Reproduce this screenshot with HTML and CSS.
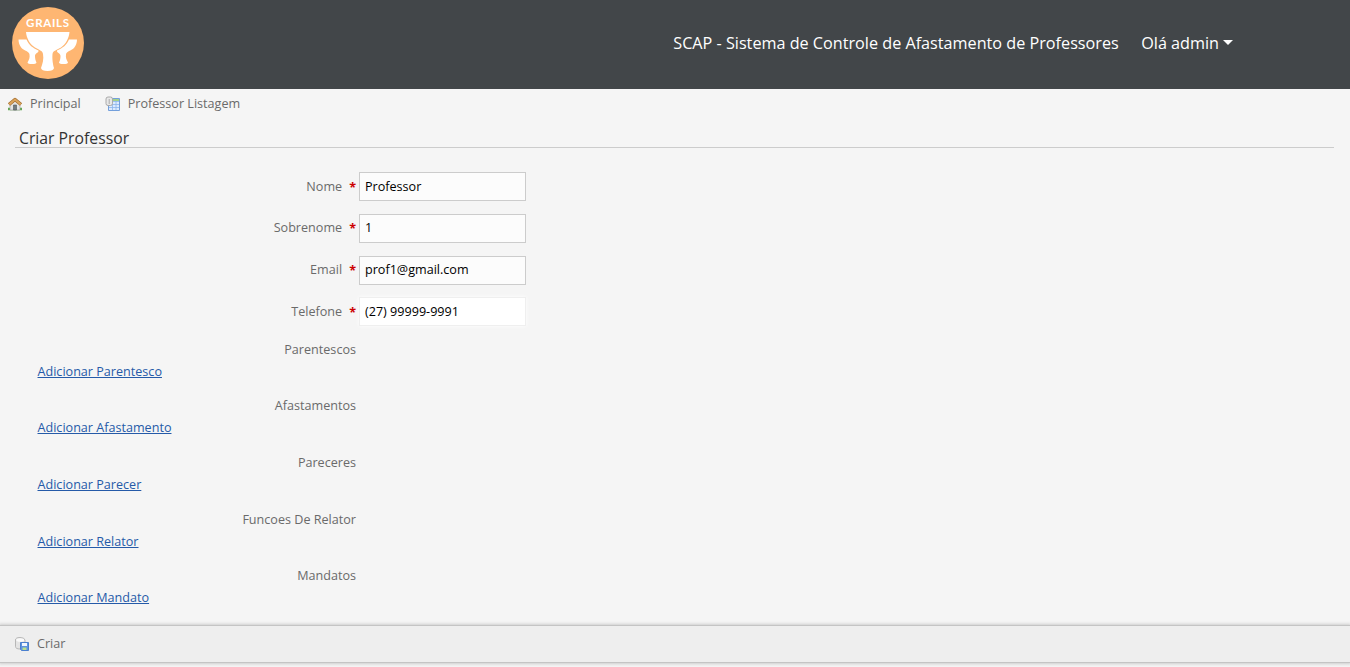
FILE: index.html
```
<!DOCTYPE html>
<html lang="pt-BR">
<head>
<meta charset="utf-8">
<title>Criar Professor</title>
<link rel="stylesheet" href="styles.css">
</head>
<body>
<header class="navbar">
  <a class="brand" aria-label="Grails">
    <svg width="72" height="72" viewBox="0 0 72 72">
      <circle cx="36" cy="36" r="36" fill="#feb672"/>
      <text class="brand-text" x="35.6" y="20" text-anchor="middle" textLength="43">GRAILS</text>
      <g fill="#fff">
        <path d="M14 25H57.500C57 31 54 37 49 40.500C45 43 41 43.500 40.500 47C40 52 41 58 42 61Q41.500 64 35.500 64T29 61C30.500 57 32 52 31 47C30.500 43.500 27 43 23 40.500C17.500 37 14.500 31 14 25Z"/>
        <path id="cup" d="M6.500 32.500H14.500C17 38 20.500 41 26.500 43.500C27 46 23 46 23 49C23 51.500 23.500 53.500 24.500 55.500Q24 57 20 57T15.500 55.500C17 53 18 50.500 17.500 47.500C17 44 12.500 44 9.500 41C7.500 38.500 6.500 35.500 6.500 32.500Z"/>
        <use href="#cup" transform="translate(71.500 0) scale(-1 1)"/>
      </g>
    </svg>
  </a>
  <nav class="navbar-menu">
    <span>SCAP - Sistema de Controle de Afastamento de Professores</span>
    <span class="user">Olá admin<i class="caret"></i></span>
  </nav>
</header>
<nav class="nav">
  <a class="nav-link home">
    <svg width="16" height="16" viewBox="0 0 16 16">
      <path d="M1 13H15" stroke="#62a853" stroke-width="2.500"/>
      <path d="M3 8L8 4L13 8V14H3Z" fill="#e3e3e3" stroke="#999" stroke-width=".6"/>
      <path d="M6.500 9H9.500V14H6.500Z" fill="#737b80" stroke="#4f5558" stroke-width=".6"/>
      <path d="M2 8.500L8 3.500L14 8.500" fill="none" stroke="#9d6529" stroke-width="3.400" stroke-linejoin="round"/>
      <path d="M2.200 8.300L8 3.500L13.800 8.300" fill="none" stroke="#d9a35b" stroke-width="2.200" stroke-linejoin="round"/>
    </svg>Principal</a>
  <a class="nav-link">
    <svg width="16" height="16" viewBox="0 0 16 16">
      <path d="M3.500 2.500H14.500V14.500H3.500Z" fill="#dceafe" stroke="#739fdb"/>
      <path d="M4 3H14V5H4Z" fill="#a4d18b"/>
      <path d="M4 5.500H14M4 8.500H14M4 11.500H14M7.500 5V14M11 5V14" stroke="#8bb5ec" stroke-width=".8"/>
      <rect x="1" y="1" width="6.500" height="8.500" rx="2" fill="#e8e8e8" stroke="#aaa"/>
      <path d="M4.200 3V8" stroke="#aaa"/>
    </svg>Professor Listagem</a>
</nav>
<main class="content">
  <h1 class="title">Criar Professor</h1>
  <form class="form">
    <div class="field"><label class="label">Nome<b class="required">*</b></label><input class="input" value="Professor"></div>
    <div class="field"><label class="label">Sobrenome<b class="required">*</b></label><input class="input" value="1"></div>
    <div class="field"><label class="label">Email<b class="required">*</b></label><input class="input" value="prof1@gmail.com"></div>
    <div class="field"><label class="label">Telefone<b class="required">*</b></label><input class="input active" value="(27) 99999-9991"></div>
    <div class="relation"><span class="label">Parentescos</span><a class="add" href="#">Adicionar Parentesco</a></div>
    <div class="relation"><span class="label">Afastamentos</span><a class="add" href="#">Adicionar Afastamento</a></div>
    <div class="relation"><span class="label">Pareceres</span><a class="add" href="#">Adicionar Parecer</a></div>
    <div class="relation"><span class="label">Funcoes De Relator</span><a class="add" href="#">Adicionar Relator</a></div>
    <div class="relation"><span class="label">Mandatos</span><a class="add" href="#">Adicionar Mandato</a></div>
  </form>
</main>
<footer class="buttons">
  <a class="save">
    <svg width="16" height="16" viewBox="0 0 16 16">
      <path d="M1.500 4Q1.500 1.500 6 1.500T11 4V10.500Q10.500 13 6 13T1.500 10.500Z" fill="#e4e4e4" stroke="#aaa" stroke-width=".8"/>
      <ellipse cx="6.200" cy="4" rx="4" ry="1.800" fill="#fafafa"/>
      <path d="M6.500 6.500H14.500V14.500H7.500L6.500 13.500Z" fill="#5d94df" stroke="#4a7fce"/>
      <path d="M8 7H13V10H8Z" fill="#eef5ff"/>
      <path d="M8.500 11.500H12.500V14H8.500Z" fill="#b8df8d"/>
    </svg>Criar</a>
</footer>
</body>
</html>
```
FILE: styles.css
```
body {
  margin: 0;
  height: 667px;
  overflow: hidden;
  background: #f5f5f5;
  color: #6a6a6a;
  font: 12.6px/18px "Open Sans", sans-serif;
}
.navbar {
  display: flex;
  justify-content: space-between;
  box-sizing: border-box;
  height: 89px;
  padding: 7px 117px 0 12px;
  background: #424649;
}
.brand { height: 72px; }
.brand-text {
  fill: #fff;
  font: bold 11.5px Lato, sans-serif;
}
.navbar-menu {
  display: flex;
  gap: 22.5px;
  padding-top: 24px;
  color: #fff;
  font-size: 16.2px;
  line-height: 24px;
}
.caret {
  display: inline-block;
  margin-left: 4px;
  border: 5px solid transparent;
  border-top-color: #fff;
  border-bottom: 0;
  vertical-align: 4px;
}
.nav {
  display: flex;
  gap: 24px;
  height: 29px;
  padding-left: 7px;
}
.nav-link, .save {
  display: flex;
  align-items: center;
  gap: 7px;
}
.title {
  height: 18px;
  margin: 10px 16px 0 15px;
  padding: 1px 4px 0;
  border-bottom: 1px solid #ccc;
  color: #333;
  font-size: 15.75px;
  font-weight: 400;
  line-height: 19px;
}
.form { padding-top: 24px; }
.field {
  display: flex;
  align-items: center;
  gap: 3px;
  height: 29px;
  margin-bottom: 12.8px;
}
.label {
  width: 356px;
  text-align: right;
}
.field .label { padding-top: .2px; }
.required {
  margin-left: 7px;
  color: #c00;
  line-height: 1;
  vertical-align: -1px;
}
.input {
  box-sizing: border-box;
  width: 167px;
  height: 29px;
  padding: 0 5px .8px;
  border: 1px solid #ccc;
  border-radius: 0;
  background: #fcfcfc;
  color: #000;
  font: inherit;
}
.input.active {
  border-color: #efefef;
  background: #fff;
  box-shadow: 0 0 4px #fff;
}
.relation {
  display: flex;
  flex-direction: column;
  gap: 4px;
  height: 56.6px;
}
.relation .label { padding-top: 1.6px; }
.add {
  margin-left: 37.5px;
  color: #255aa8;
}
.buttons {
  display: flex;
  box-sizing: border-box;
  height: 38px;
  margin-top: 2.8px;
  padding: 0 0 0 14px;
  border: solid #c4c4c4;
  border-width: 1px 0;
  background: #eee;
  box-shadow: 0 0 3px 1px #ccc;
}
```
